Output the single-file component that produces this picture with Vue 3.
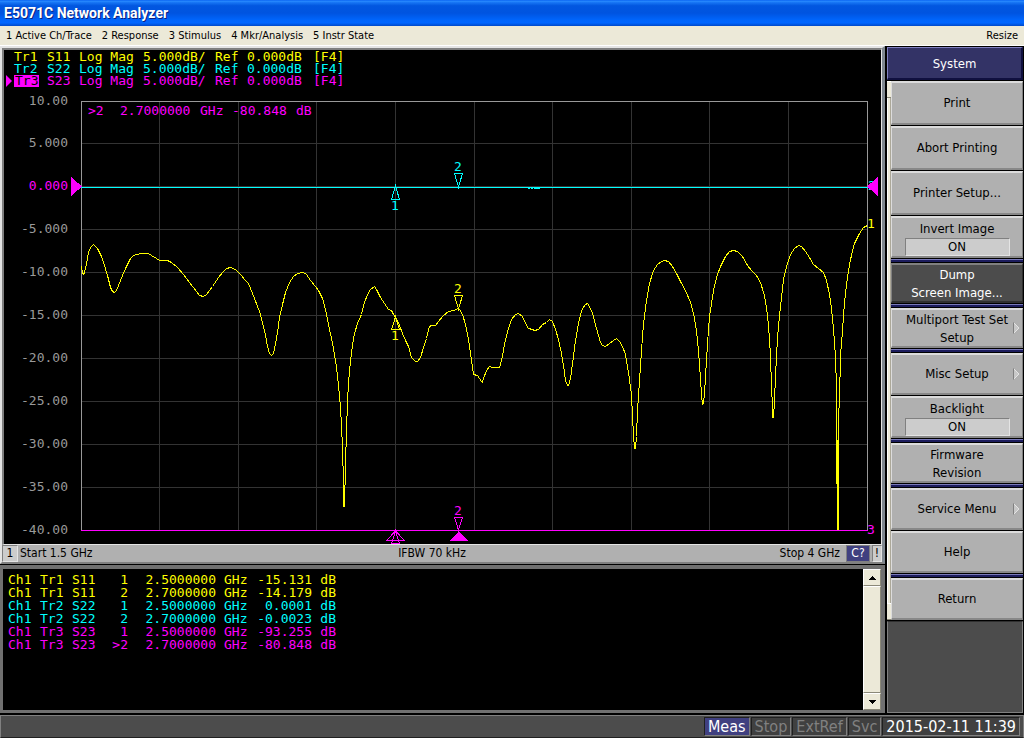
<script setup>
const menus = ['1 Active Ch/Trace', '2 Response', '3 Stimulus', '4 Mkr/Analysis', '5 Instr State']

const traces = [
  { id: 'Tr1', param: 'S11', tone: 'yellow' },
  { id: 'Tr2', param: 'S22', tone: 'cyan' },
  { id: 'Tr3', param: 'S23', tone: 'magenta', active: true },
]

const axis = ['10.00', '5.000', '0.000', '-5.000', '-10.00', '-15.00', '-20.00', '-25.00', '-30.00', '-35.00', '-40.00']
const gridY = [101, 143, 186, 229, 272, 315, 358, 401, 444, 487, 530]
const gridX = [159, 238, 316, 395, 474, 552, 631, 709, 788]

const s11 = `81,266 82,273 83,274 84,272 86,263 88,252 89,249 91,246 93,244 95,246 97,248 99,252 101,256 104,265
107,275 110,287 112,291 114,292 116,290 118,285 122,275 126,266 130,258 133,255 136,254 141,253 148,253 151,255
156,258 159,260 167,260 171,262 177,267 183,274 189,282 196,291 199,295 203,296 206,294 212,286 218,277 222,272
226,268 230,267 235,269 240,274 245,280 248,283 254,298 259,311 262,322 265,335 267,346 269,353 271,355 273,353
275,343 277,332 279,317 282,304 285,292 289,282 293,276 297,273 303,272 306,274 310,280 315,286 318,290 322,298
325,309 328,324 331,338 333,348 335,360 337,375 339,395 340,407 341,425 342,447 343,484 343,506 344,506 345,465
346,430 347,402 348,382 350,360 352,345 354,333 357,323 361,314 364,302 367,294 370,289 374,286 376,289 380,297
384,303 388,309 391,310 393,314 396,318 399,325 402,333 405,340 408,346 411,357 415,361 417,361 420,357 423,347
426,338 429,326 431,325 435,325 438,321 443,315 448,311 454,310 457,308 459,309 462,314 465,324 468,339 470,353
472,367 473,374 477,375 481,381 482,382 483,378 486,370 489,366 492,367 499,367 502,356 504,344 507,331 511,319
515,314 518,313 522,316 525,323 528,328 532,329 534,330 538,329 542,324 546,322 549,319 552,321 555,329 558,339
561,353 564,372 565,380 567,385 568,385 570,378 572,363 575,340 578,323 580,314 582,308 585,304 587,303 589,306
592,313 596,328 600,342 602,345 605,346 609,343 613,340 616,338 619,341 622,346 625,354 628,372 631,394 632,416
633,435 634,448 635,448 636,436 637,410 639,380 641,350 643,323 646,300 649,283 653,270 657,264 661,261 664,260
668,261 672,266 676,273 680,281 685,290 690,302 693,313 696,330 698,350 700,378 701,395 702,404 703,403 704,393
705,376 706,360 707,343 709,316 711,303 713,290 716,277 720,266 725,256 729,251 733,250 737,251 742,256 747,265
751,270 756,275 760,282 764,295 766,307 768,325 770,355 771,387 772,405 772,417 773,417 774,400 775,376 777,337
779,315 781,297 783,279 786,266 790,254 794,248 798,245 801,246 805,251 809,257 813,264 818,268 823,272 826,280
829,294 831,308 833,328 835,356 836,388 836,435 837,530 838,530 838,416 839,400 840,355 842,330 844,302 847,276
850,259 854,243 859,233 863,227 867,225`

const markers = [
  { trace: 'Tr1', param: 'S11', no: '1', freq: '2.5000000', value: '-15.131', tone: 'yellow' },
  { trace: 'Tr1', param: 'S11', no: '2', freq: '2.7000000', value: '-14.179', tone: 'yellow' },
  { trace: 'Tr2', param: 'S22', no: '1', freq: '2.5000000', value: '0.0001', tone: 'cyan' },
  { trace: 'Tr2', param: 'S22', no: '2', freq: '2.7000000', value: '-0.0023', tone: 'cyan' },
  { trace: 'Tr3', param: 'S23', no: '1', freq: '2.5000000', value: '-93.255', tone: 'magenta' },
  { trace: 'Tr3', param: 'S23', no: '>2', freq: '2.7000000', value: '-80.848', tone: 'magenta' },
]

const keyGroups = [
  [
    { lines: ['Print'], size: 'tall' },
    { lines: ['Abort Printing'], size: 'tall' },
    { lines: ['Printer Setup...'], size: 'tall' },
    { lines: ['Invert Image'], value: 'ON', size: 'mid' },
  ],
  [{ lines: ['Dump', 'Screen Image...'], size: 'low', pressed: true }],
  [{ lines: ['Multiport Test Set', 'Setup'], size: 'low', more: true }],
  [
    { lines: ['Misc Setup'], size: 'mid', more: true },
    { lines: ['Backlight'], value: 'ON', size: 'mid' },
  ],
  [{ lines: ['Firmware', 'Revision'], size: 'low' }],
  [
    { lines: ['Service Menu'], size: 'mid', more: true },
    { lines: ['Help'], size: 'mid' },
  ],
  [{ lines: ['Return'], size: 'mid' }],
]
</script>

<template>
  <div class="app">
    <header class="title">E5071C Network Analyzer</header>
    <nav class="menubar">
      <button v-for="m in menus" :key="m" class="menu">{{ m }}</button>
      <button class="menu resize">Resize</button>
    </nav>

    <div class="body">
      <main class="left">
        <section class="chart">
          <div class="screen">
            <div class="legend">
              <div v-for="t in traces" :key="t.id" class="legend-row" :class="t.tone">
                <span class="arrow"><svg v-if="t.active" width="7" height="12"><path d="M1 0L7 6L1 12Z" fill="#f0f" /></svg></span>
                <span><span :class="{ active: t.active }">{{ t.id }}</span></span>
                <span>{{ t.param }}</span>
                <span>Log Mag</span>
                <span>5.000dB/</span>
                <span>Ref</span>
                <span>0.000dB</span>
                <span>[F4]</span>
              </div>
            </div>
            <svg class="plot" viewBox="4 88 877 456" shape-rendering="crispEdges">
              <g stroke="#333" fill="none">
                <path v-for="x in gridX" :key="'x' + x" :d="`M${x + 0.5} 102V530`" />
                <path v-for="y in gridY" :key="'y' + y" :d="`M82 ${y + 0.5}H867`" />
              </g>
              <path d="M81.5 531V101.5H867.5V531" fill="none" stroke="#999" />
              <g class="mono" text-anchor="end">
                <text v-for="(label, i) in axis" :key="label" x="68" :y="gridY[i] + 4" :fill="i === 2 ? '#f0f' : '#999'">{{ label }}</text>
              </g>
              <g class="mono" fill="#f0f">
                <text x="88" y="115">&gt;2</text>
                <text x="120" y="115">2.7000000</text>
                <text x="200" y="115">GHz</text>
                <text x="232" y="115">-80.848</text>
                <text x="296" y="115">dB</text>
              </g>
              <g class="mono" fill="none" stroke="#0ff">
                <path d="M81 187.5H868M528 188.5H530M531 188.5H533M534 188.5H540" />
                <path d="M454.5 173.5H462.5L458.5 187Z" />
                <path d="M395.5 186L391.5 199.5H399.5Z" />
                <text x="454" y="171">2</text>
                <text x="391" y="210">1</text>
                <text x="868" y="190">2</text>
              </g>
              <g class="mono" fill="none" stroke="#ff0">
                <g transform="translate(0.5 0.5)"><polyline :points="s11" /></g>
                <path d="M837 440H839V530H837Z" fill="#ff0" stroke="none" />
                <path d="M454.5 295.5H462.5L458.5 309Z" />
                <path d="M395.5 317L391.5 329.5H399.5Z" />
                <text x="454" y="293">2</text>
                <text x="391" y="340">1</text>
                <text x="867" y="228">1</text>
              </g>
              <g class="mono" fill="none" stroke="#f0f">
                <path d="M81 530.5H868" />
                <path d="M454.5 517.5H462.5L458.5 530Z" />
                <path d="M395.5 531L386.5 540.5H404.5Z" />
                <path d="M395.5 531L391.5 543.5H399.5Z" />
                <path d="M459 531L468 541H449Z" fill="#f0f" stroke="none" />
                <path d="M71 177V196L82 186.500Z" fill="#f0f" stroke="none" />
                <path d="M878 177V196L867 186.500Z" fill="#f0f" stroke="none" />
                <text x="454" y="515">2</text>
                <text x="867" y="534">3</text>
              </g>
            </svg>
          </div>
          <div class="sweep">
            <span class="channel">1</span>
            <span class="start">Start 1.5 GHz</span>
            <span class="ifbw">IFBW 70 kHz</span>
            <span class="stop">Stop 4 GHz</span>
            <span class="cor">C?</span>
            <span class="warn">!</span>
          </div>
        </section>

        <section class="list">
          <div class="rows">
            <table class="marker-table">
              <tbody>
                <tr v-for="(m, i) in markers" :key="i" :class="m.tone">
                  <td class="c32">Ch1</td>
                  <td class="c32">{{ m.trace }}</td>
                  <td class="c32">{{ m.param }}</td>
                  <td class="c24 num">{{ m.no }}</td>
                  <td class="c88 num">{{ m.freq }}</td>
                  <td class="c40 unit">GHz</td>
                  <td class="c56 num">{{ m.value }}</td>
                  <td class="c24 num">dB</td>
                </tr>
              </tbody>
            </table>
          </div>
          <div class="scroll">
            <button class="sbtn" aria-label="Scroll up"><svg width="7" height="4" shape-rendering="crispEdges"><path d="M3.500 0L7 4H0Z" /></svg></button>
            <div class="thumb"></div>
            <button class="sbtn" aria-label="Scroll down"><svg width="7" height="4" shape-rendering="crispEdges"><path d="M0 0H7L3.500 4Z" /></svg></button>
          </div>
        </section>
      </main>

      <aside class="side">
        <h1 class="heading">System</h1>
        <div class="keypad">
          <div class="strip"><i></i><b></b><i></i></div>
          <div class="keys">
            <div v-for="(g, gi) in keyGroups" :key="gi" class="group">
              <button v-for="k in g" :key="k.lines[0]" class="key" :class="[k.size, { pressed: k.pressed, double: k.value || k.lines.length > 1 }]">
                <span v-for="l in k.lines" :key="l" class="line">{{ l }}</span>
                <span v-if="k.value" class="value">{{ k.value }}</span>
                <svg v-if="k.more" class="more" width="7" height="12"><path d="M.5 11.500V.5" stroke="#808080" /><path d="M1 1L6 6L1 11" fill="#c8c8c8" stroke="#e4e4e4" /></svg>
              </button>
            </div>
          </div>
        </div>
        <div class="blank"></div>
      </aside>
    </div>

    <footer class="status">
      <span class="cell on">Meas</span>
      <span class="cell">Stop</span>
      <span class="cell">ExtRef</span>
      <span class="cell">Svc</span>
      <span class="cell time">2015-02-11 11:39</span>
    </footer>
  </div>
</template>

<style>
body { background: #000; }
</style>

<style scoped>
* { box-sizing: border-box; }
button { font: inherit; color: inherit; margin: 0; padding: 0; border-radius: 0; }
.app {
  min-height: 100vh;
  display: flex;
  flex-direction: column;
  background: #000;
  font-family: "DejaVu Sans Condensed", "DejaVu Sans", sans-serif;
  font-size: 11px;
  color: #000;
}
.title {
  height: 26px;
  padding-left: 4px;
  color: #fff;
  font: bold 14px/27px Roboto, sans-serif;
  text-shadow: 1px 1px 0 #0a1f80;
  background: linear-gradient(#0058ee, #2a8cff 4%, #1674f4 10%, #0257e0 22%, #0054e0 50%, #0064fa 75%, #0066ff 88%, #0048c8 100%);
}
.menubar {
  height: 20px;
  display: flex;
  align-items: center;
  gap: 10px;
  padding: 0 6px;
  background: #ece9d8;
  border-bottom: 1px solid #fff;
}
.menu { border: 0; background: none; white-space: nowrap; }
.resize { margin-left: auto; }
.body { flex: 1; display: flex; }
.left { flex: 1; min-width: 0; display: flex; flex-direction: column; }
.chart {
  background: #b0b0b0;
  border: 2px solid #e4e4e4;
  border-right: 3px solid #808890;
  border-bottom: 2px solid #808080;
}
.screen {
  background: #000;
  border-left: 2px solid #808080;
  border-top: 2px solid #808080;
  border-bottom: 1px solid #e4e4e4;
  border-right: 1px solid #e4e4e4;
}
.legend { padding-top: 1px; height: 38px; }
.legend-row {
  display: grid;
  grid-template-columns: 10px 33px 32px 64px 72px 32px 66px 40px;
  height: 12px;
  font: 13px/12px "DejaVu Sans Mono", monospace;
}
.arrow { padding-left: 1px; }
.arrow svg { display: block; }
.legend-row > span { white-space: pre; }
.active { display: inline-block; padding: 0 1px; height: 12px; background: #f0f; color: #000; }
.plot { display: block; width: 100%; }
.mono { font: 13px "DejaVu Sans Mono", monospace; }
.mono text { stroke: none; }
g[stroke="#0ff"] text { fill: #0ff; }
g[stroke="#ff0"] text { fill: #ff0; }
g[stroke="#f0f"] text { fill: #f0f; }
.yellow { color: #ff0; }
.cyan { color: #0ff; }
.magenta { color: #f0f; }
.sweep {
  display: grid;
  grid-template-columns: 16px 1fr auto 1fr 24px 10px;
  gap: 2px;
  height: 17px;
  font-size: 12px;
  line-height: 17px;
}
.channel, .warn { text-align: center; background: #ccc; border: 1px solid #808080; border-right-color: #e4e4e4; border-bottom-color: #e4e4e4; line-height: 15px; }
.stop { text-align: right; padding-right: 4px; }
.cor { background: #404080; color: #fff; text-align: center; border: 1px solid #808080; line-height: 15px; }
.list {
  flex: 1;
  display: flex;
  margin-top: 1px;
  border: 3px solid #707070;
  border-top-width: 4px;
  border-right-width: 4px;
  background: #000;
}
.rows { flex: 1; padding: 4px 0 0 5px; }
.marker-table { table-layout: fixed; border-collapse: collapse; width: 328px; font: 13px/13px "DejaVu Sans Mono", monospace; }
td { padding: 0; height: 13px; white-space: nowrap; }
.num { text-align: right; }
.unit { padding-left: 8px; }
.c24 { width: 24px; }
.c32 { width: 32px; }
.c40 { width: 40px; }
.c56 { width: 56px; }
.c88 { width: 88px; }
.scroll { width: 18px; display: flex; flex-direction: column; background: #f4f2e8; }
.sbtn, .thumb { border: 1px solid #fff; border-right-color: #8a8878; border-bottom-color: #8a8878; background: #ece9d8; }
.sbtn { height: 17px; display: grid; place-items: center; }
.thumb { flex: 1; }
.side { width: 139px; display: flex; flex-direction: column; padding: 1px 1px 0 2px; }
.heading {
  margin: 0 0 1px;
  height: 33px;
  font-size: 13px;
  font-weight: normal;
  line-height: 31px;
  text-align: center;
  color: #fff;
  background: #333366;
  border: 1px solid #8080c0;
  border-right: 2px solid #101040;
  border-bottom: 2px solid #101040;
}
.keypad { display: flex; }
.strip { width: 4px; display: flex; flex-direction: column; background: #ece9d8; }
.strip i { height: 17px; border-top: 1px solid #fff; border-bottom: 1px solid #8a8878; }
.strip b { flex: 1; border-left: 1px solid #fff; border-right: 1px solid #aca899; }
.keys { flex: 1; }
.group { display: flex; flex-direction: column; gap: 1px; }
.group + .group { border-top: 1px solid #000; }
.group + .group::before { content: ""; height: 3px; background: linear-gradient(#7878b8 33%, #1c1c5c 33%); }
.key {
  position: relative;
  display: flex;
  flex-direction: column;
  align-items: center;
  justify-content: center;
  font-size: 13px;
  line-height: 18px;
  background: #b0b0b0;
  border: 2px solid #dcdcdc;
  border-left-width: 1px;
  border-right: 1px solid #808080;
  border-bottom: 2px solid #888;
}
.tall { height: 44px; }
.mid { height: 42px; }
.low { height: 40px; }
.double { padding-top: 2px; }
.line { white-space: nowrap; }
.pressed { background: #4c4c4c; color: #fff; border-color: #808080 #303030 #303030 #808080; }
.value { width: 105px; height: 18px; line-height: 16px; background: #ccc; border: 1px solid #808080; border-right-color: #e4e4e4; border-bottom-color: #e4e4e4; }
.more { position: absolute; right: 2px; top: 50%; margin-top: -6px; fill: none; }
.blank { flex: 1; margin-top: 1px; background: #4c4c4c; border: 1px solid #808080; border-top-color: #303030; }
.status {
  height: 23px;
  margin-top: 2px;
  display: flex;
  justify-content: flex-end;
  gap: 1px;
  padding: 1px 3px 1px 0;
  background: #4c4c4c;
  border: 1px solid #808080;
  border-bottom-color: #202020;
  font-size: 16px;
}
.cell { padding: 0 3px; line-height: 18px; color: #808080; background: #404040; border: 1px solid #202020; border-right-color: #808080; border-bottom-color: #808080; white-space: nowrap; }
.on { background: #404080; color: #fff; }
.time { color: #fff; }
</style>
